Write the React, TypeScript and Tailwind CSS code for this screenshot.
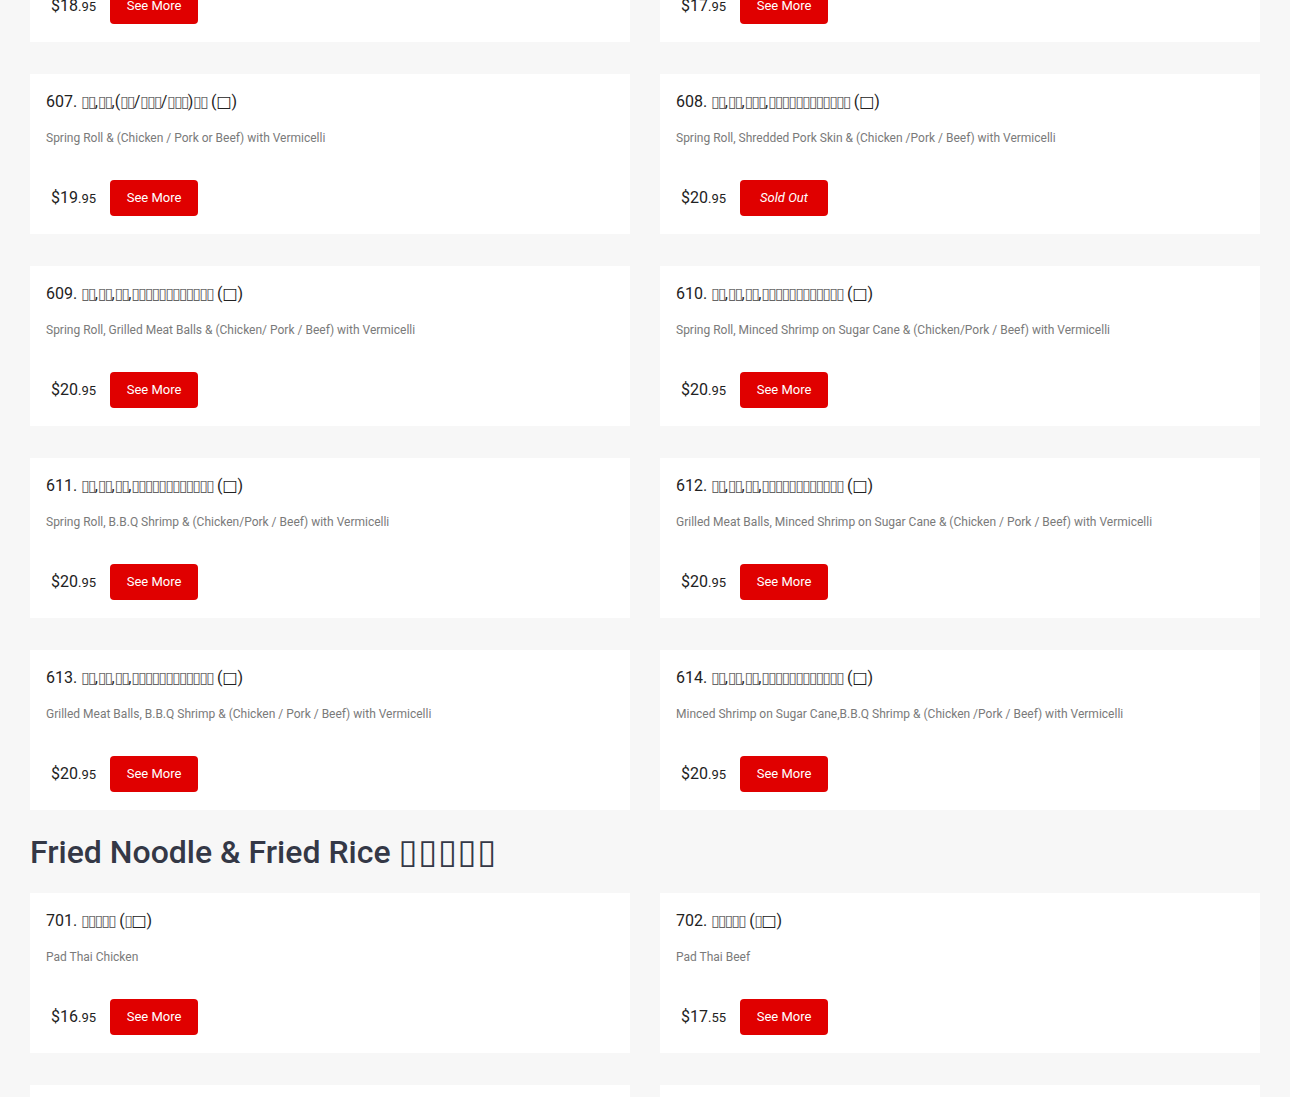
import React from "react";

type Item = {
  no: string;
  name: string;
  desc: string;
  dollars: string;
  cents: string;
  soldOut?: boolean;
};

// "□" = small missing glyph box, "◻" = big box
const topRow: Item[] = [
  { no: "605", name: "□□,□□,□□,□□□□□□□□□□□□ (◻)", desc: "Spring Roll & Grilled Pork with Vermicelli", dollars: "18", cents: "95" },
  { no: "606", name: "□□,□□,□□□□□□ (◻)", desc: "Spring Roll & Beef with Vermicelli", dollars: "17", cents: "95" },
];

const springRolls: Item[] = [
  { no: "607", name: "□□,□□,(□□/□□□/□□□)□□ (◻)", desc: "Spring Roll & (Chicken / Pork or Beef) with Vermicelli", dollars: "19", cents: "95" },
  { no: "608", name: "□□,□□,□□□,□□□□□□□□□□□□ (◻)", desc: "Spring Roll, Shredded Pork Skin & (Chicken /Pork / Beef) with Vermicelli", dollars: "20", cents: "95", soldOut: true },
  { no: "609", name: "□□,□□,□□,□□□□□□□□□□□□ (◻)", desc: "Spring Roll, Grilled Meat Balls & (Chicken/ Pork / Beef) with Vermicelli", dollars: "20", cents: "95" },
  { no: "610", name: "□□,□□,□□,□□□□□□□□□□□□ (◻)", desc: "Spring Roll, Minced Shrimp on Sugar Cane & (Chicken/Pork / Beef) with Vermicelli", dollars: "20", cents: "95" },
  { no: "611", name: "□□,□□,□□,□□□□□□□□□□□□ (◻)", desc: "Spring Roll, B.B.Q Shrimp & (Chicken/Pork / Beef) with Vermicelli", dollars: "20", cents: "95" },
  { no: "612", name: "□□,□□,□□,□□□□□□□□□□□□ (◻)", desc: "Grilled Meat Balls, Minced Shrimp on Sugar Cane & (Chicken / Pork / Beef) with Vermicelli", dollars: "20", cents: "95" },
  { no: "613", name: "□□,□□,□□,□□□□□□□□□□□□ (◻)", desc: "Grilled Meat Balls, B.B.Q Shrimp & (Chicken / Pork / Beef) with Vermicelli", dollars: "20", cents: "95" },
  { no: "614", name: "□□,□□,□□,□□□□□□□□□□□□ (◻)", desc: "Minced Shrimp on Sugar Cane,B.B.Q Shrimp & (Chicken /Pork / Beef) with Vermicelli", dollars: "20", cents: "95" },
];

const friedNoodle: Item[] = [
  { no: "701", name: "□□□□□ (□◻)", desc: "Pad Thai Chicken", dollars: "16", cents: "95" },
  { no: "702", name: "□□□□□ (□◻)", desc: "Pad Thai Beef", dollars: "17", cents: "55" },
  { no: "703", name: "□□□□□ (□◻)", desc: "Pad Thai Shrimp", dollars: "18", cents: "95" },
  { no: "704", name: "□□□□□ (□◻)", desc: "Pad Thai Tofu", dollars: "16", cents: "95" },
];

function Name({ text }: { text: string }) {
  return (
    <>
      {Array.from(text).map((c, i) => {
        if (c === "□")
          return (
            <span key={i} className="inline-block w-[6.8px] text-center font-['DejaVu_Sans'] text-[16px] leading-none text-[#666]">
              ▯
            </span>
          );
        if (c === "◻")
          return (
            <span key={i} className="font-['DejaVu_Sans'] leading-none">
              □
            </span>
          );
        return <React.Fragment key={i}>{c}</React.Fragment>;
      })}
    </>
  );
}

function Card({ item }: { item: Item }) {
  return (
    <div className="bg-white px-4 pt-[17px] pb-[18px]">
      <div className="h-[22px] text-[16px] leading-[22px] text-[#222] whitespace-nowrap">
        {item.no}. <Name text={item.name} />
      </div>
      <div className="mt-[17px] h-4 text-[12px] leading-[16px] text-[#7a7a7a]">{item.desc}</div>
      <div className="mt-[34px] flex items-center h-9">
        <div className="ml-[5px] w-[59px] text-[16px] text-[#222]">
          ${item.dollars}
          <span className="text-[13px]">.{item.cents}</span>
        </div>
        <button className="w-[88px] h-9 rounded-[4px] bg-[#e00000] text-white text-[13px]">
          {item.soldOut ? <span className="italic">Sold Out</span> : "See More"}
        </button>
      </div>
    </div>
  );
}

export default function App() {
  return (
    <div className="h-[1097px] overflow-hidden bg-[#f7f7f7] px-[30px] font-['Roboto',sans-serif]">
      <div className="mt-[-118px] grid grid-cols-2 gap-x-[30px] gap-y-[32px]">
        {[...topRow, ...springRolls].map((it) => (
          <Card key={it.no} item={it} />
        ))}
      </div>

      <h2 className="mt-[22px] mb-[21px] h-10 text-[32px] leading-[40px] font-medium text-[#343846]">
        Fried Noodle &amp; Fried Rice{" "}
        <span className="font-['DejaVu_Sans'] font-normal text-[34px] tracking-[1px] leading-none">▯▯▯▯▯</span>
      </h2>

      <div className="grid grid-cols-2 gap-x-[30px] gap-y-[32px]">
        {friedNoodle.map((it) => (
          <Card key={it.no} item={it} />
        ))}
      </div>
    </div>
  );
}
